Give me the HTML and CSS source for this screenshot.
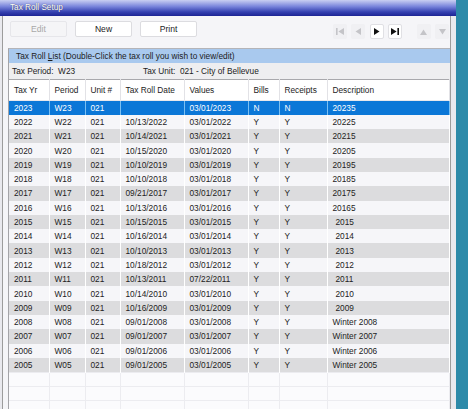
FILE: index.html
```html
<!DOCTYPE html>
<html lang="en">
<head>
  <meta charset="UTF-8">
  <title>Tax Roll Setup</title>
  <link rel="stylesheet" href="styles.css">
</head>
<body>
  <div class="window">
    <div class="titlebar">Tax Roll Setup</div>
    <div class="client">
      <div class="toolbar">
        <button class="btn" disabled>Edit</button>
        <button class="btn">New</button>
        <button class="btn">Print</button>
        <div class="nav">
          <span class="nav-btn off"><svg width="8" height="7" viewBox="0 0 8 7"><rect x="0" y="0" width="1.6" height="7"/><polygon points="8,0 8,7 2.4,3.5"/></svg></span>
          <span class="nav-btn off"><svg width="6" height="7" viewBox="0 0 6 7"><polygon points="6,0 6,7 0.5,3.5"/></svg></span>
          <span class="nav-btn"><svg width="6" height="7" viewBox="0 0 6 7"><polygon points="0,0 0,7 5.5,3.5"/></svg></span>
          <span class="nav-btn"><svg width="8" height="7" viewBox="0 0 8 7"><polygon points="0,0 0,7 5.6,3.5"/><rect x="6.4" y="0" width="1.6" height="7"/></svg></span>
          <span class="nav-btn off up"><svg width="7" height="6" viewBox="0 0 7 6"><polygon points="0,6 7,6 3.5,0.5"/></svg></span>
          <span class="nav-btn off"><svg width="7" height="6" viewBox="0 0 7 6"><polygon points="0,0 7,0 3.5,5.5"/></svg></span>
        </div>
      </div>

      <div class="panel">
        <div class="panel-head">Tax Roll <u>L</u>ist (Double-Click the tax roll you wish to view/edit)</div>
        <div class="filter">
          <span class="period">Tax Period:&nbsp; W23</span>
          <span>Tax Unit:&nbsp; 021 - City of Bellevue</span>
        </div>
        <table class="rolls">
          <colgroup>
            <col style="width:40px"><col style="width:36px"><col style="width:35px"><col style="width:64px">
            <col style="width:64px"><col style="width:31px"><col style="width:48px"><col style="width:122px">
          </colgroup>
          <thead>
            <tr><th>Tax Yr</th><th>Period</th><th>Unit #</th><th>Tax Roll Date</th><th>Values</th><th>Bills</th><th>Receipts</th><th>Description</th></tr>
          </thead>
          <tbody>
            <tr class="selected"><td>2023</td><td>W23</td><td>021</td><td></td><td>03/01/2023</td><td>N</td><td>N</td><td>20235</td></tr>
            <tr><td>2022</td><td>W22</td><td>021</td><td>10/13/2022</td><td>03/01/2022</td><td>Y</td><td>Y</td><td>20225</td></tr>
            <tr class="alt"><td>2021</td><td>W21</td><td>021</td><td>10/14/2021</td><td>03/01/2021</td><td>Y</td><td>Y</td><td>20215</td></tr>
            <tr><td>2020</td><td>W20</td><td>021</td><td>10/15/2020</td><td>03/01/2020</td><td>Y</td><td>Y</td><td>20205</td></tr>
            <tr class="alt"><td>2019</td><td>W19</td><td>021</td><td>10/10/2019</td><td>03/01/2019</td><td>Y</td><td>Y</td><td>20195</td></tr>
            <tr><td>2018</td><td>W18</td><td>021</td><td>10/10/2018</td><td>03/01/2018</td><td>Y</td><td>Y</td><td>20185</td></tr>
            <tr class="alt"><td>2017</td><td>W17</td><td>021</td><td>09/21/2017</td><td>03/01/2017</td><td>Y</td><td>Y</td><td>20175</td></tr>
            <tr><td>2016</td><td>W16</td><td>021</td><td>10/13/2016</td><td>03/01/2016</td><td>Y</td><td>Y</td><td>20165</td></tr>
            <tr class="alt"><td>2015</td><td>W15</td><td>021</td><td>10/15/2015</td><td>03/01/2015</td><td>Y</td><td>Y</td><td class="pad">2015</td></tr>
            <tr><td>2014</td><td>W14</td><td>021</td><td>10/16/2014</td><td>03/01/2014</td><td>Y</td><td>Y</td><td class="pad">2014</td></tr>
            <tr class="alt"><td>2013</td><td>W13</td><td>021</td><td>10/10/2013</td><td>03/01/2013</td><td>Y</td><td>Y</td><td class="pad">2013</td></tr>
            <tr><td>2012</td><td>W12</td><td>021</td><td>10/18/2012</td><td>03/01/2012</td><td>Y</td><td>Y</td><td class="pad">2012</td></tr>
            <tr class="alt"><td>2011</td><td>W11</td><td>021</td><td>10/13/2011</td><td>07/22/2011</td><td>Y</td><td>Y</td><td class="pad">2011</td></tr>
            <tr><td>2010</td><td>W10</td><td>021</td><td>10/14/2010</td><td>03/01/2010</td><td>Y</td><td>Y</td><td class="pad">2010</td></tr>
            <tr class="alt"><td>2009</td><td>W09</td><td>021</td><td>10/16/2009</td><td>03/01/2009</td><td>Y</td><td>Y</td><td class="pad">2009</td></tr>
            <tr><td>2008</td><td>W08</td><td>021</td><td>09/01/2008</td><td>03/01/2008</td><td>Y</td><td>Y</td><td>Winter 2008</td></tr>
            <tr class="alt"><td>2007</td><td>W07</td><td>021</td><td>09/01/2007</td><td>03/01/2007</td><td>Y</td><td>Y</td><td>Winter 2007</td></tr>
            <tr><td>2006</td><td>W06</td><td>021</td><td>09/01/2006</td><td>03/01/2006</td><td>Y</td><td>Y</td><td>Winter 2006</td></tr>
            <tr class="alt"><td>2005</td><td>W05</td><td>021</td><td>09/01/2005</td><td>03/01/2005</td><td>Y</td><td>Y</td><td>Winter 2005</td></tr>
            <tr class="empty"><td></td><td></td><td></td><td></td><td></td><td></td><td></td><td></td></tr>
            <tr class="empty"><td></td><td></td><td></td><td></td><td></td><td></td><td></td><td></td></tr>
            <tr class="empty"><td></td><td></td><td></td><td></td><td></td><td></td><td></td><td></td></tr>
          </tbody>
        </table>
      </div>
    </div>
  </div>
</body>
</html>
```

FILE: styles.css
```css
body{
  margin: 0;
  background-color: #2d8aa9;
  font-family: "Liberation Sans", Arial, sans-serif;
  font-size: 8.3px;
  color: #1c1c1c;
}
.window{
  width: 456px;
  height: 409px;
  overflow: hidden;
  background-color: #e9e9ee;
}
.titlebar{
  height: 16px;
  line-height: 16px;
  padding-left: 10px;
  color: #fff;
  font-size: 8.2px;
  background: linear-gradient(#c9cff2, #7a86dc 40%, #3440b0 75%, #1d2494);
  text-shadow: 0 0 1px #334;
}
.client{
  margin-left: 2px;
  width: 447px;
  height: 393px;
  border-left: 1px solid #9c9c9c;
  border-right: 1px solid #9c9c9c;
  background-color: #f5f5f8;
}
.toolbar{
  display: flex;
  align-items: flex-start;
  height: 32px;
  padding-left: 7px;
  box-sizing: border-box;
  padding-top: 5px;
}
.btn{
  width: 57px;
  height: 16px;
  margin-right: 8px;
  padding: 0;
  font-family: inherit;
  font-size: 8.6px;
  color: #1c1c1c;
  background-color: #fff;
  border: 1px solid #dcdce0;
  border-radius: 2px;
}
.btn:disabled{
  color: #a8a8a8;
  background-color: #f5f5f7;
  border-color: #e6e6ea;
}
.nav{
  display: flex;
  margin-left: auto;
  margin-right: 1px;
  margin-top: 3px;
  gap: 4.5px;
}
.nav-btn{
  display: flex;
  align-items: center;
  justify-content: center;
  width: 14px;
  height: 15px;
  box-sizing: border-box;
  background-color: #fff;
  border: 1px solid #e0e0e4;
  border-radius: 2px;
  fill: #111;
}
.nav-btn.off{
  background-color: #f0f0f3;
  border-color: #f0f0f3;
  fill: #c4c4c8;
}
.nav-btn.up{
  margin-left: 10px;
}
.panel{
  margin-left: 5px;
  border-top: 1px solid #b4b4b8;
  border-left: 1px solid #a4a4a8;
  height: 400px;
}
.panel-head{
  height: 14px;
  line-height: 15px;
  padding-left: 7px;
  background-color: #a9c9ee;
}
.filter{
  display: flex;
  height: 16px;
  line-height: 16px;
  padding-left: 3px;
  background-color: #eeeef0;
}
.period{
  width: 131px;
}
.rolls{
  width: 440px;
  table-layout: fixed;
  border-collapse: collapse;
  border-top: 1px solid #a8a8ac;
}
.rolls th{
  height: 20px;
  padding: 0 0 0 5px;
  text-align: left;
  font-weight: normal;
  background-color: #fff;
  border-right: 1px solid #e2e2e6;
  border-bottom: 1px solid #e8e8ec;
}
.rolls tbody tr{
  height: 14.3px;
  background-color: #f6f6f9;
}
.rolls td{
  padding: 0 0 0 5px;
  line-height: 10px;
  white-space: nowrap;
  overflow: hidden;
  border-right: 1px solid #fff;
}
.rolls td.pad{
  padding-left: 8px;
}
.rolls tr.alt{
  background-color: #dcdcde;
}
.rolls tr.selected{
  background-color: #0b77d7;
  color: #fff;
}
.rolls tr.selected td{
  border-right-color: #7cc0f2;
}
.rolls tr.empty{
  height: 14px;
  background-color: #fbfbfd;
}
.rolls tr.empty td{
  border-top: 1px solid #ececf0;
  border-right-color: #ececf0;
}
```
